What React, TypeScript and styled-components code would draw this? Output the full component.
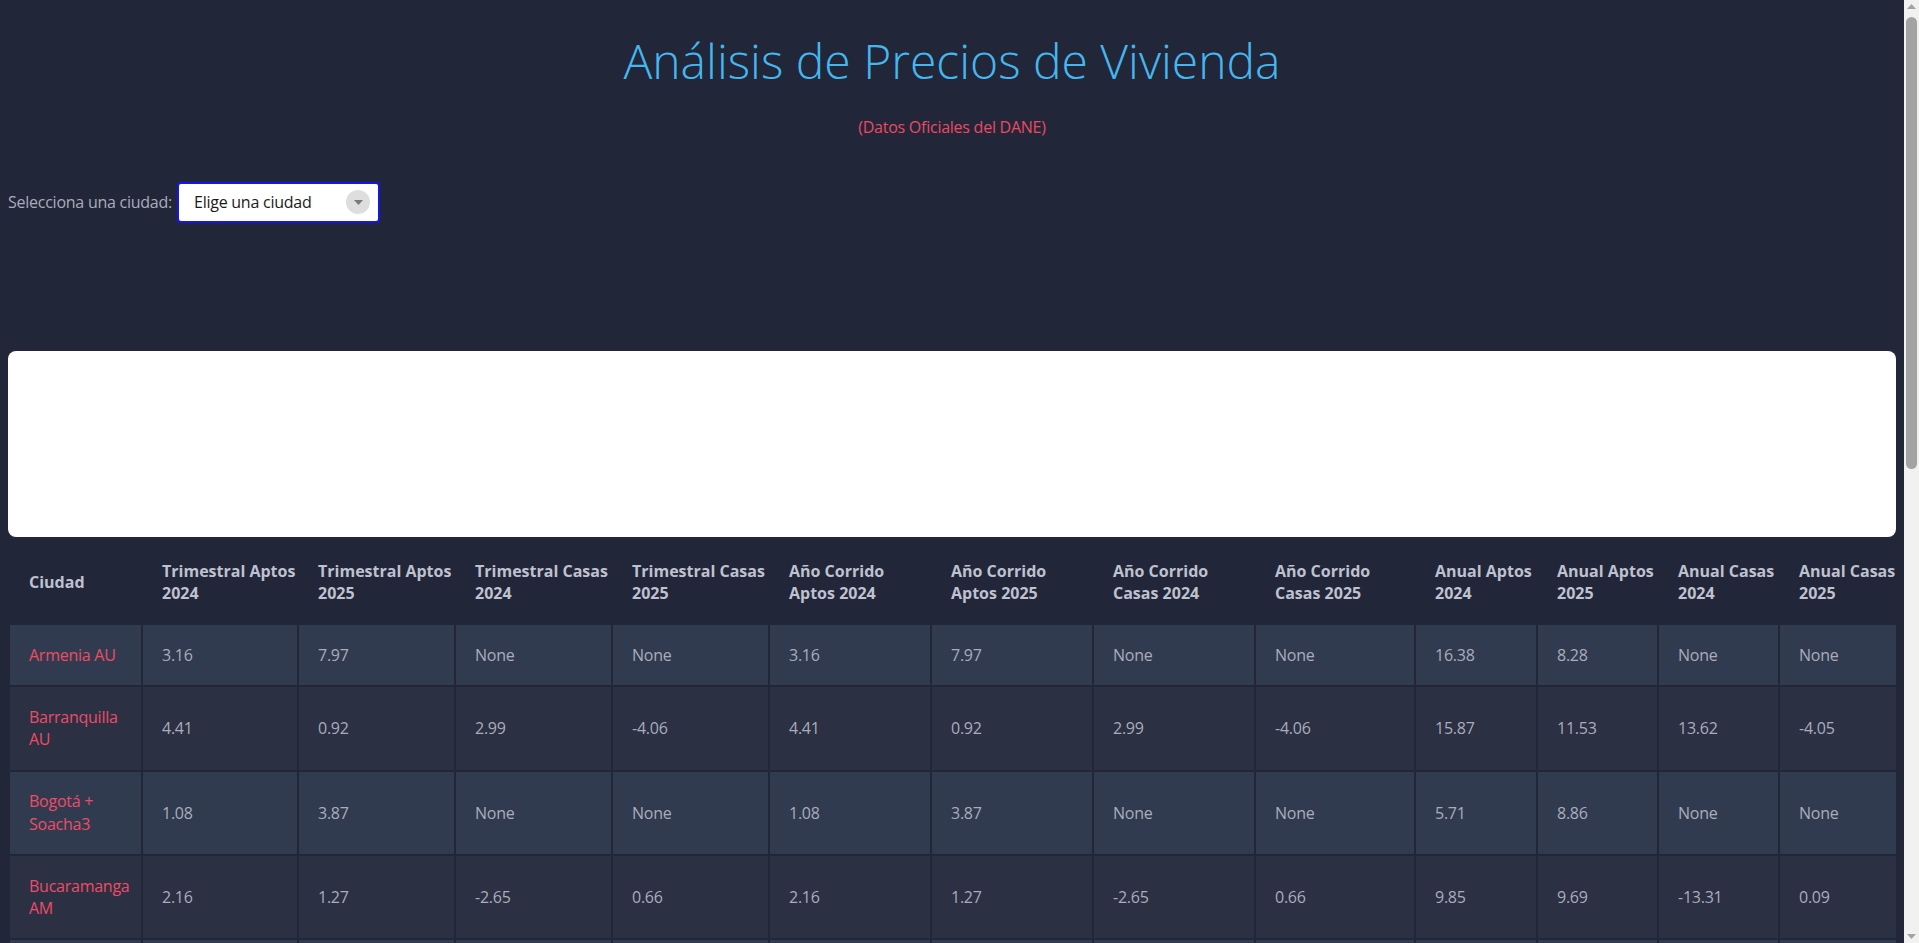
import React from "react";
import styled, { createGlobalStyle } from "styled-components";

const GlobalStyle = createGlobalStyle`
  html {
    background: #212639;
  }
  body {
    margin: 8px 23px 8px 8px;
    background: #212639;
    font-family: "Open Sans", "Noto Sans", sans-serif;
    color: #a9adbb;
  }
`;

const Page = styled.div`
  display: flex;
  flex-direction: column;
`;

const Header = styled.header`
  display: flex;
  flex-direction: column;
  align-items: center;
  padding-top: 22px;
`;

const Title = styled.h1`
  margin: 0;
  font-size: 48px;
  font-weight: 300;
  line-height: 1.3;
  color: #45b7f0;
`;

const Subtitle = styled.p`
  margin: 24px 0 0;
  font-size: 16px;
  letter-spacing: -0.25px;
  line-height: 1.4;
  color: #ec4a63;
`;

const Controls = styled.div`
  display: flex;
  align-items: center;
  gap: 5px;
  margin-top: 43px;
`;

const Label = styled.label`
  font-size: 16px;
  letter-spacing: -0.25px;
  color: #a9adbb;
`;

const SelectBox = styled.div`
  box-sizing: border-box;
  width: 203px;
  height: 41px;
  display: flex;
  align-items: center;
  justify-content: space-between;
  padding: 0 8px 0 15px;
  background: #ffffff;
  border: 2px solid #1414f0;
  border-radius: 4px;
  font-size: 16px;
  letter-spacing: -0.25px;
  color: #1a1a1a;
`;

const ArrowCircle = styled.span`
  width: 24px;
  height: 24px;
  border-radius: 50%;
  background: #dedede;
  display: flex;
  align-items: center;
  justify-content: center;
`;

const ChartCard = styled.div`
  margin-top: 128px;
  height: 186px;
  background: #ffffff;
  border-radius: 8px;
`;

const Table = styled.table`
  margin-top: 2px;
  width: 100%;
  table-layout: fixed;
  border-collapse: separate;
  border-spacing: 2px;
  font-size: 16px;
  line-height: 1.4;
`;

const HeadCell = styled.th`
  padding: 18.8px 0 18.8px 19px;
  text-align: left;
  font-weight: 700;
  color: #bfc1cf;
  vertical-align: middle;
`;

const Row = styled.tr<{ $odd: boolean }>`
  background: ${(p) => (p.$odd ? "#313b50" : "#2b3043")};
`;

const Cell = styled.td<{ $city?: boolean }>`
  padding: 18.8px 4px 18.8px 19px;
  letter-spacing: -0.25px;
  color: ${(p) => (p.$city ? "#ee4c66" : "#a9adbb")};
  vertical-align: middle;
`;

/* Window scrollbar drawn over the right edge of the viewport */
const ScrollTrack = styled.div`
  position: fixed;
  top: 0;
  right: 0;
  width: 15px;
  height: 100vh;
  background: #f1f1f1;
  display: flex;
  flex-direction: column;
  align-items: center;
  justify-content: space-between;
  padding: 4px 0;
  box-sizing: border-box;
`;

const ScrollThumb = styled.div`
  position: absolute;
  top: 17px;
  left: 2px;
  width: 11px;
  height: 452px;
  border-radius: 6px;
  background: #a3a3a3;
`;

const ScrollArrow = ({ down }: { down?: boolean }) => (
  <svg width="9" height="5" viewBox="0 0 9 5" aria-hidden="true">
    <polygon points={down ? "0,0 9,0 4.5,5" : "0,5 9,5 4.5,0"} fill="#a3a3a3" />
  </svg>
);

const colWidths = [131, 154, 155, 155, 155, 160, 160, 160, 158, 120, 119, 119, 119];

const headers = [
  "Ciudad",
  "Trimestral Aptos 2024",
  "Trimestral Aptos 2025",
  "Trimestral Casas 2024",
  "Trimestral Casas 2025",
  "Año Corrido Aptos 2024",
  "Año Corrido Aptos 2025",
  "Año Corrido Casas 2024",
  "Año Corrido Casas 2025",
  "Anual Aptos 2024",
  "Anual Aptos 2025",
  "Anual Casas 2024",
  "Anual Casas 2025",
];

const rows: string[][] = [
  ["Armenia AU", "3.16", "7.97", "None", "None", "3.16", "7.97", "None", "None", "16.38", "8.28", "None", "None"],
  ["Barranquilla AU", "4.41", "0.92", "2.99", "-4.06", "4.41", "0.92", "2.99", "-4.06", "15.87", "11.53", "13.62", "-4.05"],
  ["Bogotá + Soacha3", "1.08", "3.87", "None", "None", "1.08", "3.87", "None", "None", "5.71", "8.86", "None", "None"],
  ["Bucaramanga AM", "2.16", "1.27", "-2.65", "0.66", "2.16", "1.27", "-2.65", "0.66", "9.85", "9.69", "-13.31", "0.09"],
  ["Cali AU", "1.94", "2.35", "None", "None", "1.94", "2.35", "None", "None", "7.42", "6.18", "None", "None"],
  ["Cartagena AU", "3.02", "1.64", "None", "None", "3.02", "1.64", "None", "None", "10.21", "7.35", "None", "None"],
  ["Cúcuta AM", "0.87", "2.11", "1.45", "0.32", "0.87", "2.11", "1.45", "0.32", "6.54", "5.92", "4.18", "3.07"],
  ["Ibagué AU", "2.48", "1.73", "None", "None", "2.48", "1.73", "None", "None", "8.93", "7.66", "None", "None"],
  ["Manizales AU", "1.56", "2.89", "None", "None", "1.56", "2.89", "None", "None", "9.12", "10.04", "None", "None"],
  ["Medellín AM", "2.73", "3.14", "1.02", "0.84", "2.73", "3.14", "1.02", "0.84", "11.47", "9.58", "6.21", "5.33"],
  ["Montería AU", "1.21", "0.76", "None", "None", "1.21", "0.76", "None", "None", "6.87", "5.49", "None", "None"],
  ["Neiva AU", "0.94", "1.88", "None", "None", "0.94", "1.88", "None", "None", "5.36", "6.72", "None", "None"],
  ["Pasto AU", "1.67", "2.03", "None", "None", "1.67", "2.03", "None", "None", "7.15", "8.01", "None", "None"],
  ["Pereira AU", "2.29", "1.52", "0.73", "1.19", "2.29", "1.52", "0.73", "1.19", "10.66", "8.47", "5.08", "4.62"],
  ["Popayán AU", "1.38", "0.95", "None", "None", "1.38", "0.95", "None", "None", "6.29", "5.84", "None", "None"],
  ["Villavicencio AU", "2.05", "1.41", "None", "None", "2.05", "1.41", "None", "None", "8.74", "7.93", "None", "None"],
];

const ChevronDown = () => (
  <svg width="9" height="5" viewBox="0 0 9 5" aria-hidden="true">
    <polygon points="0,0 9,0 4.5,5" fill="#7a7a7a" />
  </svg>
);

export default function App() {
  return (
    <>
      <GlobalStyle />
      <Page>
        <Header>
          <Title>Análisis de Precios de Vivienda</Title>
          <Subtitle>(Datos Oficiales del DANE)</Subtitle>
        </Header>
        <Controls>
          <Label>Selecciona una ciudad:</Label>
          <SelectBox>
            <span>Elige una ciudad</span>
            <ArrowCircle>
              <ChevronDown />
            </ArrowCircle>
          </SelectBox>
        </Controls>
        <ChartCard />
        <Table>
          <colgroup>
            {colWidths.map((w, i) => (
              <col key={i} style={{ width: w }} />
            ))}
          </colgroup>
          <thead>
            <tr>
              {headers.map((h) => (
                <HeadCell key={h}>{h}</HeadCell>
              ))}
            </tr>
          </thead>
          <tbody>
            {rows.map((r, i) => (
              <Row key={r[0]} $odd={i % 2 === 0}>
                {r.map((v, j) => (
                  <Cell key={j} $city={j === 0}>
                    {v}
                  </Cell>
                ))}
              </Row>
            ))}
          </tbody>
        </Table>
      </Page>
      <ScrollTrack>
        <ScrollArrow />
        <ScrollThumb />
        <ScrollArrow down />
      </ScrollTrack>
    </>
  );
}
